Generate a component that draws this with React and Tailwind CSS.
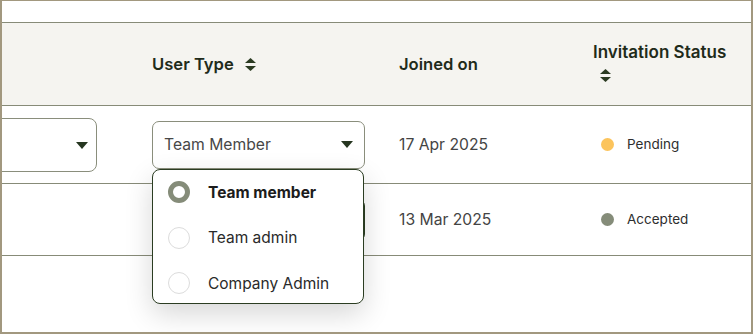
import React from "react";

const font = { fontFamily: "Inter, 'Noto Sans', sans-serif" };

function SortIcon() {
  return (
    <svg width="11" height="13" viewBox="0 0 11 13" className="shrink-0">
      <path d="M5.5 0 L11 5 L0 5 Z" fill="#2b3b22" />
      <path d="M0 8 L11 8 L5.5 13 Z" fill="#2b3b22" />
    </svg>
  );
}

function Caret() {
  return (
    <svg width="12" height="7" viewBox="0 0 12 7" className="shrink-0">
      <path d="M0 0 L12 0 L6 7 Z" fill="#263620" />
    </svg>
  );
}

function Radio({ checked }) {
  return checked ? (
    <span className="w-[22px] h-[22px] rounded-full border-[5px] border-[#858c79] bg-white shrink-0" />
  ) : (
    <span className="w-[22px] h-[22px] rounded-full border border-[#dcdcdc] bg-white shrink-0" />
  );
}

const options = [
  { label: "Team member", checked: true },
  { label: "Team admin", checked: false },
  { label: "Company Admin", checked: false },
];

function Dot({ color }) {
  return <span className={`w-[13px] h-[13px] rounded-full shrink-0 ${color}`} />;
}

export default function App() {
  return (
    <div
      style={font}
      className="w-[753px] h-[334px] bg-white border-t border-x-2 border-b-2 border-[#a2987f] overflow-hidden flex flex-col"
    >
      <div className="h-[22px] shrink-0 border-b border-[#878b78]" />

      {/* Header */}
      <div className="h-[83px] shrink-0 bg-[#f5f4f0] border-b border-[#878b78] grid grid-cols-[150px_247px_194px_1fr] items-center text-[16.6px] font-semibold text-[#1f2b1a]">
        <div />
        <div className="flex items-center gap-[11px] pt-[1px]">
          <span>User Type</span>
          <SortIcon />
        </div>
        <div className="pt-[1px]">Joined on</div>
        <div className="flex flex-col items-start gap-[7px] -mt-[4px]">
          <span className="leading-[20px] text-[17px]">Invitation Status</span>
          <span className="pl-[7px]">
            <SortIcon />
          </span>
        </div>
      </div>

      {/* Row 1 */}
      <div className="h-[78px] shrink-0 border-b border-[#878b78] grid grid-cols-[150px_247px_194px_1fr] items-center relative z-10">
        <div className="flex">
          <div className="-ml-[40px] w-[135px] h-[54px] rounded-[8px] border border-[#8a8e7c] flex items-center justify-end pr-[8px] mt-[1px]">
            <Caret />
          </div>
        </div>
        <div className="relative">
          <div className="w-[213px] h-[48px] rounded-[7px] border border-[#8a8e7c] flex items-center justify-between pl-[11px] pr-[11px] text-[15.7px] text-[#474747]">
            <span>Team Member</span>
            <Caret />
          </div>
          <div className="absolute left-0 top-full w-[212px] h-[135px] bg-white rounded-[8px] border border-[#2b3d22] shadow-[0_10px_28px_rgba(0,0,0,0.16)] overflow-hidden">
            {options.map((o) => (
              <div key={o.label} className="h-[45.5px] flex items-center gap-[18px] pl-[15px]">
                <Radio checked={o.checked} />
                <span
                  className={`text-[15.5px] ${o.checked ? "font-bold text-[#1c1c1c]" : "text-[#2a2a2a]"}`}
                >
                  {o.label}
                </span>
              </div>
            ))}
          </div>
        </div>
        <div className="text-[15.7px] text-[#444444]">17 Apr 2025</div>
        <div className="flex items-center gap-[13px] pl-[8px] text-[13.5px] text-[#2e2e2e]">
          <Dot color="bg-[#fcc45c]" />
          <span>Pending</span>
        </div>
      </div>

      {/* Row 2 */}
      <div className="h-[72px] shrink-0 border-b border-[#878b78] grid grid-cols-[150px_247px_194px_1fr] items-center">
        <div />
        <div className="w-[213px] h-[42px] rounded-[7px] border border-[#2b3d22]" />
        <div className="text-[15.7px] text-[#444444]">13 Mar 2025</div>
        <div className="flex items-center gap-[13px] pl-[8px] text-[13.5px] text-[#2e2e2e]">
          <Dot color="bg-[#858c79]" />
          <span>Accepted</span>
        </div>
      </div>

      <div className="flex-1" />
    </div>
  );
}
